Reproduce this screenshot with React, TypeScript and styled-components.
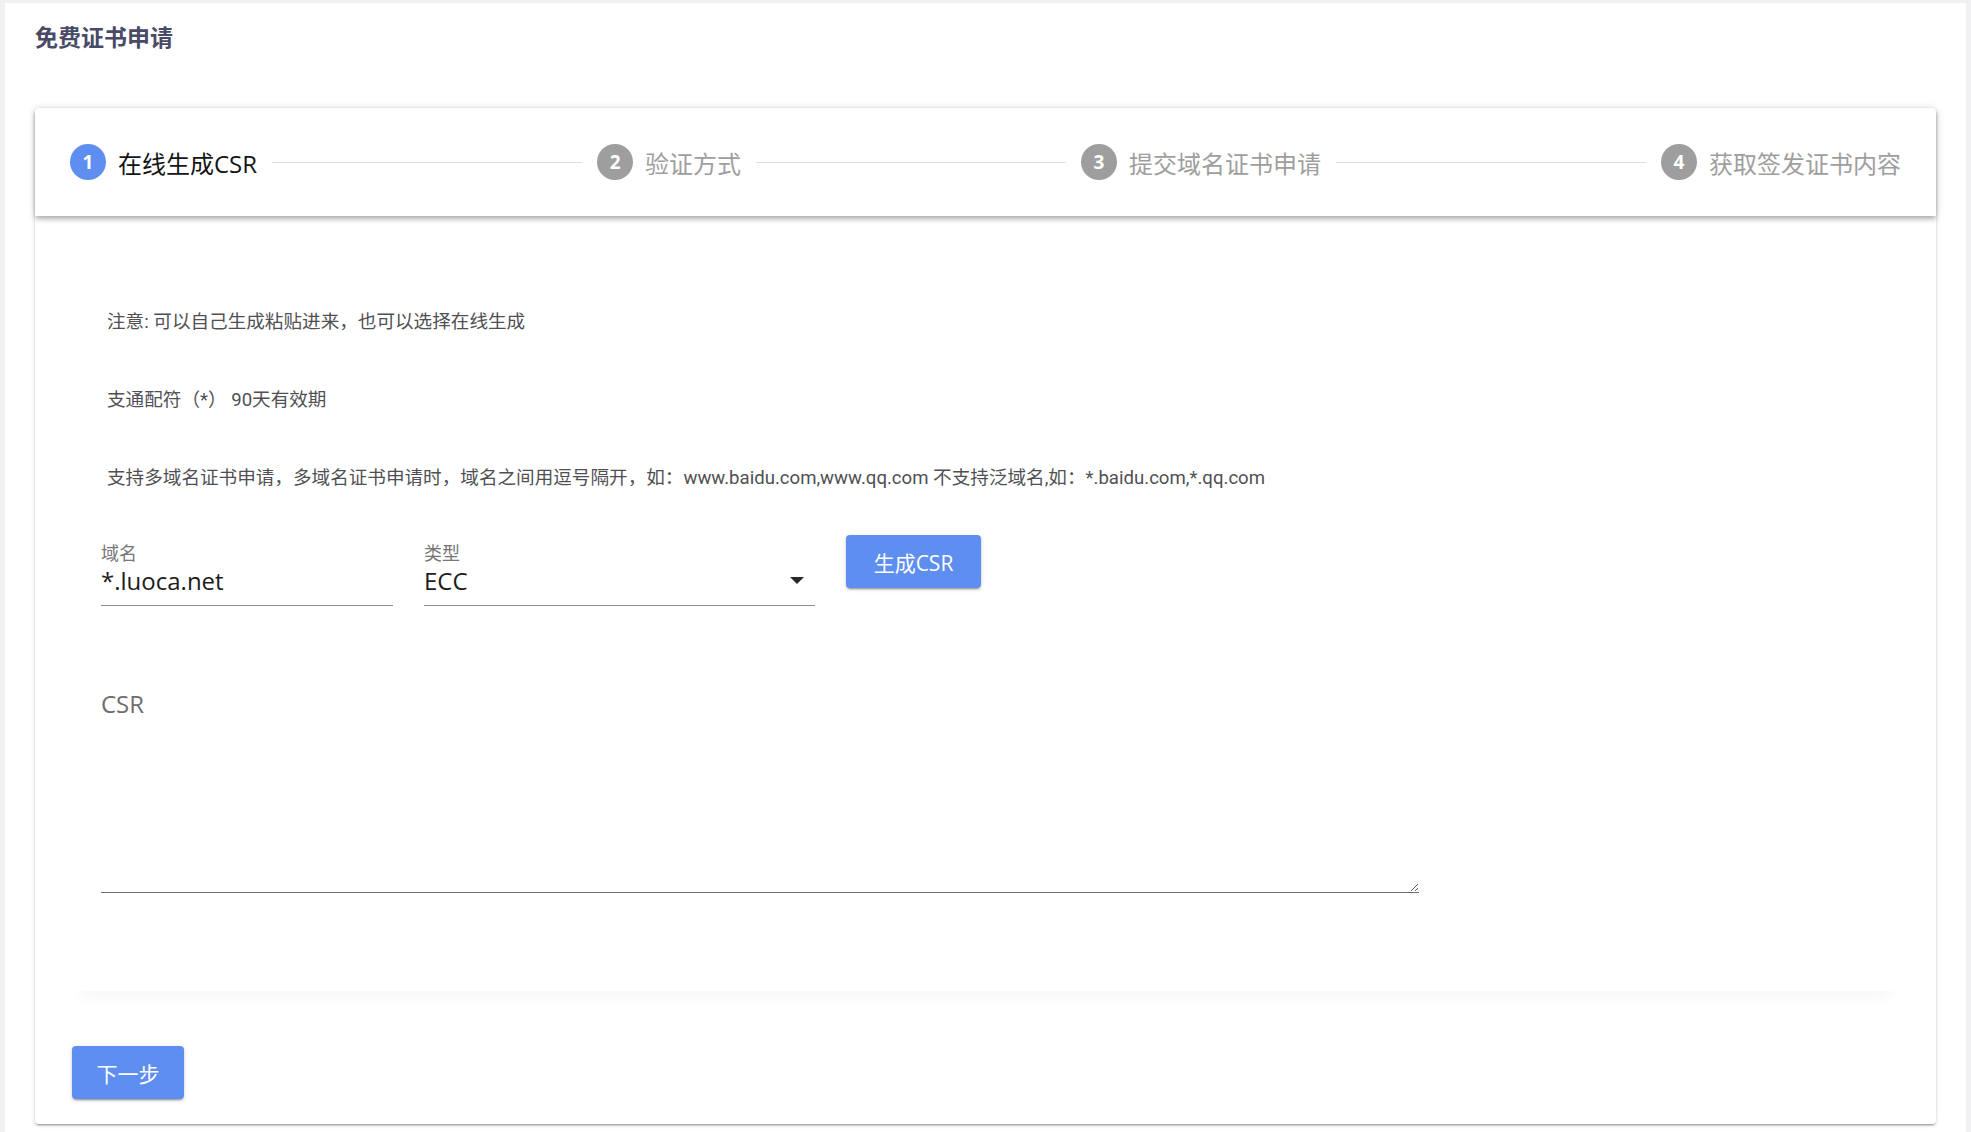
import React from 'react';
import styled, { createGlobalStyle } from 'styled-components';

const GlobalStyle = createGlobalStyle`
    html, body {
        margin: 0;
        padding: 0;
        background-color: rgb(241, 241, 244);
        font-family: Roboto, "Noto Sans CJK SC", sans-serif;
    }
`;

const Page = styled('div')`
    background-color: rgb(255, 255, 255);
    margin: 3px 5px 0;
    padding: 18px 30px 0;
    min-height: 1129px;
    box-sizing: border-box;
`;

const Title = styled('h1')`
    font-family: "Noto Sans CJK SC", sans-serif;
    color: rgb(72, 74, 102);
    font-size: 23px;
    font-weight: 700;
    line-height: 30px;
    margin: 0 0 57px;
`;

const Card = styled('div')`
    background-color: rgb(255, 255, 255);
    border-radius: 4px;
    box-shadow: 0 3px 1px -2px rgba(0, 0, 0, 0.2), 0 2px 2px 0 rgba(0, 0, 0, 0.14),
        0 1px 5px 0 rgba(0, 0, 0, 0.12);
`;

const StepHeader = styled('div')`
    display: flex;
    align-items: center;
    height: 108px;
    padding: 0 35px;
    box-shadow: 0 2px 4px -1px rgba(0, 0, 0, 0.2), 0 4px 5px 0 rgba(0, 0, 0, 0.14),
        0 1px 10px 0 rgba(0, 0, 0, 0.12);
    position: relative;
    z-index: 1;
    border-radius: 4px 4px 0 0;
`;

const Step = styled('div')`
    display: flex;
    align-items: center;
    gap: 12px;
`;

const StepCircle = styled('span')<{ $active?: boolean }>`
    display: flex;
    align-items: center;
    justify-content: center;
    width: 36px;
    height: 36px;
    border-radius: 50%;
    background-color: ${(p) => (p.$active ? 'rgb(93, 142, 240)' : 'rgb(158, 158, 158)')};
    color: rgb(255, 255, 255);
    font-family: "Open Sans", sans-serif;
    font-size: 19px;
    font-weight: 700;
`;

const StepLabel = styled('span')<{ $active?: boolean }>`
    font-family: "Open Sans", "Noto Sans CJK SC", sans-serif;
    font-size: 24px;
    color: ${(p) => (p.$active ? 'rgb(20, 20, 20)' : 'rgb(158, 158, 158)')};
    white-space: nowrap;
`;

const StepDivider = styled('div')`
    flex: 1;
    height: 1px;
    background-color: rgb(222, 222, 222);
    margin: 0 15px;
`;

const Content = styled('div')`
    padding: 36px 37px 25px;
`;

const Sheet = styled('div')`
    padding: 55px 0 98px 29px;
    box-shadow: 0 14px 14px -10px rgba(40, 40, 90, 0.05);
`;

const Notes = styled('div')`
    display: flex;
    flex-direction: column;
    gap: 48px;
    padding-left: 6px;
`;

const Note = styled('p')`
    margin: 0;
    font-size: 18.6px;
    line-height: 30px;
    color: rgb(80, 80, 84);
`;

const FormRow = styled('div')`
    display: flex;
    align-items: flex-start;
    gap: 31px;
    margin-top: 42px;
`;

const Field = styled('label')<{ $width: number }>`
    display: flex;
    flex-direction: column;
    width: ${(p) => p.$width}px;
    padding-top: 6px;
    border-bottom: 1px solid rgb(140, 140, 140);
    padding-bottom: 8px;
    position: relative;
`;

const FieldLabel = styled('span')`
    font-family: "Noto Sans CJK SC", sans-serif;
    font-size: 18px;
    line-height: 22px;
    color: rgb(118, 118, 118);
    margin-bottom: 2px;
`;

const FieldValue = styled('span')`
    font-family: "Open Sans", sans-serif;
    font-size: 24px;
    line-height: 32px;
    color: rgb(28, 28, 28);
`;

const Caret = styled('span')`
    position: absolute;
    right: 11px;
    bottom: 21px;
    width: 0;
    height: 0;
    border-left: 7px solid transparent;
    border-right: 7px solid transparent;
    border-top: 7px solid rgb(40, 40, 40);
`;

const Button = styled('button')<{ $width: number }>`
    width: ${(p) => p.$width}px;
    height: 53px;
    border: none;
    border-radius: 4px;
    background-color: rgb(93, 142, 240);
    color: rgb(255, 255, 255);
    font-family: "Open Sans", "Noto Sans CJK SC", sans-serif;
    font-size: 21px;
    cursor: pointer;
    box-shadow: 0 3px 1px -2px rgba(0, 0, 0, 0.2), 0 2px 2px 0 rgba(0, 0, 0, 0.14),
        0 1px 5px 0 rgba(0, 0, 0, 0.12);
`;

const CsrField = styled('div')`
    display: flex;
    flex-direction: column;
    width: 1318px;
    margin-top: 82px;
`;

const CsrLabel = styled('span')`
    font-family: "Open Sans", sans-serif;
    font-size: 24px;
    line-height: 32px;
    color: rgb(110, 110, 110);
`;

const CsrInput = styled('textarea')`
    display: block;
    height: 172px;
    border: none;
    border-bottom: 1px solid rgb(110, 110, 110);
    outline: none;
    resize: vertical;
    font-family: "Liberation Mono", monospace;
    font-size: 16px;
    padding: 0;
    background: transparent;
`;

const Footer = styled('div')`
    margin-top: 55px;
`;

const steps = ['在线生成CSR', '验证方式', '提交域名证书申请', '获取签发证书内容'];

export default function App() {
    return (
        <>
            <GlobalStyle />
            <Page>
                <Title>免费证书申请</Title>
                <Card>
                    <StepHeader>
                        {steps.map((label, i) => (
                            <React.Fragment key={label}>
                                {i > 0 && <StepDivider />}
                                <Step>
                                    <StepCircle $active={i === 0}>{i + 1}</StepCircle>
                                    <StepLabel $active={i === 0}>{label}</StepLabel>
                                </Step>
                            </React.Fragment>
                        ))}
                    </StepHeader>
                    <Content>
                        <Sheet>
                            <Notes>
                                <Note>注意: 可以自己生成粘贴进来，也可以选择在线生成</Note>
                                <Note>支通配符（*） 90天有效期</Note>
                                <Note>
                                    支持多域名证书申请，多域名证书申请时，域名之间用逗号隔开，如：www.baidu.com,www.qq.com 不支持泛域名,如：*.baidu.com,*.qq.com
                                </Note>
                            </Notes>
                            <FormRow>
                                <Field $width={292}>
                                    <FieldLabel>域名</FieldLabel>
                                    <FieldValue>*.luoca.net</FieldValue>
                                </Field>
                                <Field $width={391}>
                                    <FieldLabel>类型</FieldLabel>
                                    <FieldValue>ECC</FieldValue>
                                    <Caret />
                                </Field>
                                <Button $width={135}>生成CSR</Button>
                            </FormRow>
                            <CsrField>
                                <CsrLabel>CSR</CsrLabel>
                                <CsrInput />
                            </CsrField>
                        </Sheet>
                        <Footer>
                            <Button $width={112}>下一步</Button>
                        </Footer>
                    </Content>
                </Card>
            </Page>
        </>
    );
}
